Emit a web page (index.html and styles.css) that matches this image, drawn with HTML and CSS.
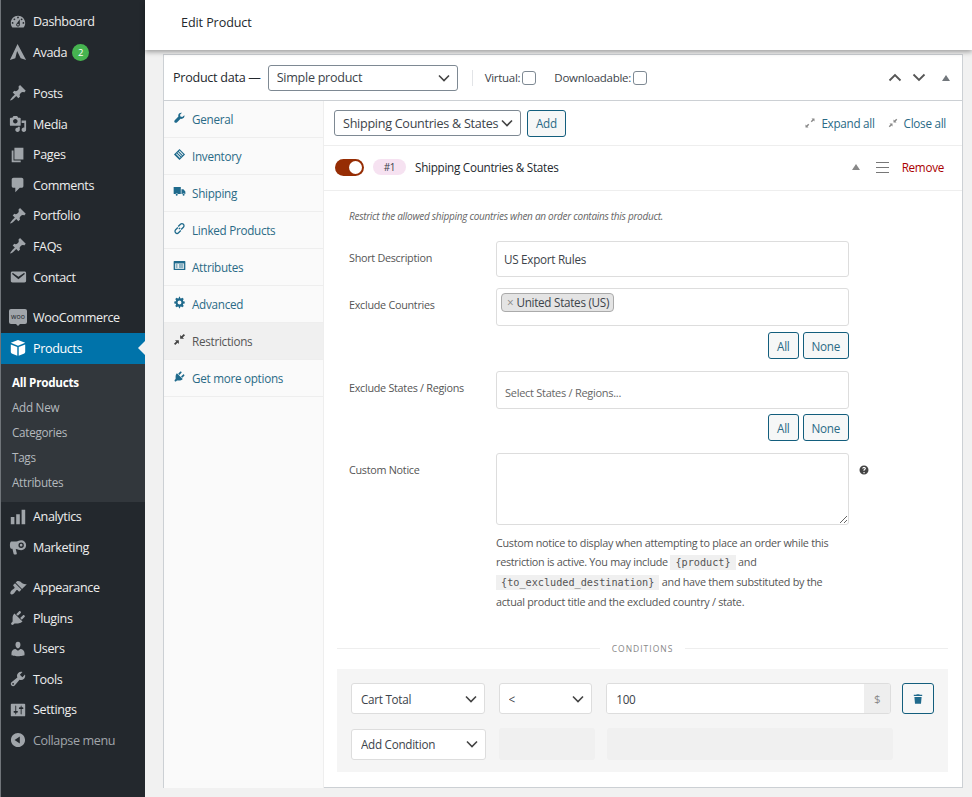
FILE: index.html
```html
<!DOCTYPE html>
<html lang="en">
<head>
    <meta charset="UTF-8">
    <meta name="viewport" content="width=device-width, initial-scale=1.0">
    <title>Edit Product</title>
    <link rel="stylesheet" href="styles.css">
</head>
<body>
    <svg class="sprite" xmlns="http://www.w3.org/2000/svg">
        <symbol id="i-dashboard" viewBox="0 0 20 20"><path d="M3.76 16h12.48c1.1-1.37 1.76-3.11 1.76-5 0-4.42-3.58-8-8-8s-8 3.58-8 8c0 1.89.66 3.63 1.76 5zM10 4c.55 0 1 .45 1 1s-.45 1-1 1-1-.45-1-1 .45-1 1-1zM6 6c.55 0 1 .45 1 1s-.45 1-1 1-1-.45-1-1 .45-1 1-1zm8 0c.55 0 1 .45 1 1s-.45 1-1 1-1-.45-1-1 .45-1 1-1zm-5.37 5.55L12 7v6c0 1.1-.9 2-2 2s-2-.9-2-2c0-.57.24-1.08.63-1.45zM4 10c.55 0 1 .45 1 1s-.45 1-1 1-1-.45-1-1 .45-1 1-1zm12 0c.55 0 1 .45 1 1s-.45 1-1 1-1-.45-1-1 .45-1 1-1zm-5 3c0-.55-.45-1-1-1s-1 .45-1 1 .45 1 1 1 1-.45 1-1z"/></symbol>
        <symbol id="i-avada" viewBox="0 0 20 20"><path d="M9.500 1 L19 19 L13 17 L9 9 L7 17 L1 19 Z"/></symbol>
        <symbol id="i-pin" viewBox="0 0 20 20"><path d="M10.44 3.02l1.82-1.82 6.36 6.35-1.83 1.82c-1.05-.68-2.48-.57-3.41.36l-.75.75c-.92.93-1.04 2.35-.35 3.41l-1.83 1.82-2.41-2.41-2.8 2.79c-.42.42-3.38 2.71-3.8 2.29s1.86-3.39 2.28-3.81l2.79-2.79L4.1 9.36l1.83-1.82c1.05.69 2.48.57 3.4-.36l.75-.75c.93-.92 1.05-2.35.36-3.41z"/></symbol>
        <symbol id="i-media" viewBox="0 0 20 20"><path d="M13 11V4c0-.55-.45-1-1-1h-1.67L9 1H5L3.67 3H2c-.55 0-1 .45-1 1v7c0 .55.45 1 1 1h10c.55 0 1-.45 1-1zM7 4.5c1.38 0 2.5 1.12 2.5 2.5S8.38 9.5 7 9.5 4.5 8.38 4.5 7 5.62 4.5 7 4.5zM14 6h5v10.5c0 1.38-1.12 2.5-2.5 2.5S14 17.88 14 16.5s1.12-2.5 2.5-2.5c.17 0 .34.02.5.05V9h-3V6zm-4 8.05V13h2v3.5c0 1.38-1.12 2.5-2.5 2.5S7 17.88 7 16.5 8.12 14 9.5 14c.17 0 .34.02.5.05z"/></symbol>
        <symbol id="i-page" viewBox="0 0 20 20"><path d="M6 15V2h10v13H6zm-1 1h8v2H3V5h2v11z"/></symbol>
        <symbol id="i-comment" viewBox="0 0 20 20"><path d="M5 2h9c1.1 0 2 .9 2 2v7c0 1.1-.9 2-2 2h-2l-5 5v-5H5c-1.1 0-2-.9-2-2V4c0-1.1.9-2 2-2z"/></symbol>
        <symbol id="i-email" viewBox="0 0 20 20"><path d="M3.87 4h13.25C18.37 4 19 4.59 19 5.79v8.42c0 1.19-.63 1.79-1.88 1.79H3.87c-1.25 0-1.88-.6-1.88-1.79V5.79c0-1.2.63-1.79 1.88-1.79zm6.62 8.6l6.74-5.53c.24-.2.43-.66.13-1.07-.29-.41-.82-.42-1.17-.17l-5.7 3.86L4.8 5.83c-.35-.25-.88-.24-1.17.17-.3.41-.11.87.13 1.07z"/></symbol>
        <symbol id="i-box" viewBox="0 0 20 20"><path d="M10 1 18 4.200 10 7.400 2 4.200zM2 6l7.200 3v9.600L3 16c-.6-.3-1-.8-1-1.500zM18 6v8.500c0 .7-.4 1.200-1 1.500l-6.200 2.600V9z"/></symbol>
        <symbol id="i-bars" viewBox="0 0 20 20"><path d="M18 18V2h-4v16h4zm-6 0V7H8v11h4zm-6 0v-8H2v8h4z"/></symbol>
        <symbol id="i-megaphone" viewBox="0 0 20 20"><path d="M13.500 2.500a5.500 5.500 0 1 1 0 11c-2 0-4-.8-6-1.200l1.200 5c.1.5-.2.9-.7.9H6c-.4 0-.8-.3-.9-.7L3.800 12H2.500C1.700 12 1 10.200 1 8s.7-4 1.500-4H8c2-.4 3.500-1.500 5.500-1.500zm0 2.500a3 3 0 1 0 0 6 3 3 0 0 0 0-6zm0 1.500a1.500 1.500 0 1 1 0 3 1.500 1.500 0 0 1 0-3z" fill-rule="evenodd"/></symbol>
        <symbol id="i-brush" viewBox="0 0 20 20"><path d="M14.480 11.060 7.410 3.990l1.500-1.500c.5-.56 2.300-.47 3.510.32 1.210.8 1.430 1.280 2.910 2.100 1.180.64 2.450 1.260 4.450.85zm-.71.71L6.700 4.700 4.930 6.470c-.39.39-.39 1.020 0 1.410l1.060 1.060c.39.39.39 1.030 0 1.420-.6.6-1.430 1.110-2.210 1.690-.35.26-.7.53-1.010.84-1.340 1.340-1.680 3.100-1 3.900.8.800 2.560.34 3.900-1 .31-.31.58-.66.84-1.010.58-.78 1.090-1.610 1.690-2.210.39-.39 1.030-.39 1.420 0l1.060 1.060c.39.39 1.020.39 1.410 0z"/></symbol>
        <symbol id="i-plugin" viewBox="0 0 20 20"><path d="M13.110 4.360 9.870 7.600 8 5.730l3.240-3.240c.35-.34 1.050-.2 1.560.32.52.51.66 1.210.31 1.550zm-8 1.770.91-1.120 9.010 9.010-1.190.84c-.71.71-2.630 1.160-3.820 1.160H6.140L4.900 17.260c-.59.59-1.540.59-2.120 0-.59-.58-.59-1.530 0-2.120l1.240-1.240v-3.880c0-1.130.4-3.190 1.090-3.890zm7.260 3.970 3.240-3.240c.34-.35 1.040-.21 1.550.31.52.51.66 1.210.31 1.550l-3.240 3.250z"/></symbol>
        <symbol id="i-user" viewBox="0 0 20 20"><path d="M10 9.250c-2.270 0-2.730-3.440-2.730-3.440C7 4.020 7.820 2 9.970 2c2.160 0 2.980 2.020 2.710 3.810 0 0-.41 3.440-2.680 3.440zm0 2.570L12.720 10c2.390 0 4.520 2.330 4.520 4.530v2.490s-3.650 1.130-7.240 1.130c-3.650 0-7.240-1.130-7.240-1.130v-2.490c0-2.250 1.940-4.480 4.470-4.480z"/></symbol>
        <symbol id="i-tools" viewBox="0 0 20 20"><path d="M16.680 9.770c-1.340 1.340-3.30 1.670-4.950.99l-5.41 6.520c-.99.99-2.590.99-3.580 0s-.99-2.590 0-3.570l6.520-5.420c-.68-1.650-.35-3.610.99-4.950 1.280-1.280 3.120-1.620 4.720-1.060l-2.890 2.890 2.820 2.820 2.860-2.870c.53 1.580.18 3.390-1.080 4.650zM3.810 16.210c.4.39 1.040.39 1.430 0 .4-.4.4-1.040 0-1.430-.39-.4-1.030-.4-1.430 0-.39.39-.39 1.030 0 1.430z"/></symbol>
        <symbol id="i-settings" viewBox="0 0 20 20"><path d="M18 16V4c0-.55-.45-1-1-1H3c-.55 0-1 .45-1 1v12c0 .55.45 1 1 1h14c.55 0 1-.45 1-1zM8 11h1c.55 0 1 .45 1 1s-.45 1-1 1H8v1.500c0 .28-.22.5-.5.5s-.5-.22-.5-.5V13H6c-.55 0-1-.45-1-1s.45-1 1-1h1V5.500c0-.28.22-.5.5-.5s.5.22.5.5V11zm5-2h-1c-.55 0-1-.45-1-1s.45-1 1-1h1V5.500c0-.28.22-.5.5-.5s.5.22.5.5V7h1c.55 0 1 .45 1 1s-.45 1-1 1h-1v5.500c0 .28-.22.5-.5.5s-.5-.22-.5-.5V9z"/></symbol>
        <symbol id="i-collapse" viewBox="0 0 20 20"><path d="M10 2.160c4.330 0 7.840 3.510 7.840 7.840s-3.510 7.840-7.840 7.840S2.160 14.330 2.160 10 5.710 2.160 10 2.160zm2 11.720V6.120L6.180 9.970z"/></symbol>
        <symbol id="i-wrench" viewBox="0 0 20 20"><path d="M17.500 6.500c.4 1.700-.1 3.300-1.300 4.400-1.300 1.200-3 1.500-4.500 1L6 17.500c-.9.900-2.400.9-3.300 0s-.9-2.400 0-3.300L8.300 8.500c-.5-1.500-.2-3.200 1-4.500C10.500 2.800 12.200 2.400 13.800 2.800l-3 3 .6 2.800 2.800.6z"/></symbol>
        <symbol id="i-tag" viewBox="0 0 20 20"><path d="M10 1.500 18.500 10 10 18.500 1.500 10zM10 4 9 5l6 6 1-1zM7.800 6.200l-1 1 6 6 1-1zM5.600 8.400l-1 1 6 6 1-1z" fill-rule="evenodd"/></symbol>
        <symbol id="i-truck" viewBox="0 0 20 20"><path d="M1 3h11v11H7.500a2 2 0 0 0-3.600 0H2c-.6 0-1-.4-1-1zM13 6.500h3l3 3.500v4h-.9a2 2 0 0 0-3.600 0H13zM5.700 13.500a1.500 1.500 0 1 1 0 3 1.500 1.500 0 0 1 0-3zM16.300 13.500a1.500 1.500 0 1 1 0 3 1.500 1.500 0 0 1 0-3z"/></symbol>
        <symbol id="i-link" viewBox="0 0 20 20"><path d="M9 11 11 9M8 7l3.500-3.500a3 3 0 0 1 4.500 4.500L12.500 11.500M12 13l-3.500 3.500a3 3 0 0 1-4.500-4.500L7.500 8.500" fill="none" stroke="currentColor" stroke-width="2"/></symbol>
        <symbol id="i-table" viewBox="0 0 20 20"><path d="M2 3h16c.6 0 1 .4 1 1v12c0 .6-.4 1-1 1H2c-.6 0-1-.4-1-1V4c0-.6.4-1 1-1zm1 4v8h14V7zm1 1.500h3v1.500H4zm5 0h7v1.500H9zM4 11.500h3V13H4zm5 0h7V13H9z" fill-rule="evenodd"/></symbol>
        <symbol id="i-gear" viewBox="0 0 20 20"><path d="M18 11.500v-3l-2.300-.5-.5-1.200 1.300-2-2.100-2.100-2 1.300-1.200-.5L10.700 1H9.300L8.800 3.500l-1.200.5-2-1.300-2.100 2.100 1.300 2L4.300 8 2 8.500v3l2.300.5.5 1.200-1.300 2 2.100 2.100 2-1.300 1.200.5.5 2.500h1.400l.5-2.500 1.200-.5 2 1.300 2.100-2.100-1.300-2 .5-1.200zM10 13a3 3 0 1 1 0-6 3 3 0 0 1 0 6z" fill-rule="evenodd"/></symbol>
        <symbol id="i-shrink" viewBox="0 0 20 20"><path d="M11 9V3l2 2 3.500-3.500 2 2L15 7l2 2zM9 11v6l-2-2-3.500 3.500-2-2L5 13l-2-2z"/></symbol>
        <symbol id="i-grow" viewBox="0 0 20 20"><path d="M19 1v6l-2-2-3.500 3.500-2-2L15 3l-2-2zM1 19v-6l2 2 3.500-3.500 2 2L5 17l2 2z"/></symbol>
        <symbol id="i-trash" viewBox="0 0 20 20"><path d="M8 2h4l1 1h4v2H3V3h4zM4 6.500h12L15 18H5z"/></symbol>
        <symbol id="i-help" viewBox="0 0 20 20"><path d="M10 1a9 9 0 1 1 0 18 9 9 0 0 1 0-18zm1.300 13.200H8.900V16.500h2.400zM10 3.800c-2.100 0-3.700 1.100-3.800 3.400h2.400c.1-.9.600-1.400 1.400-1.400.8 0 1.300.4 1.300 1.100 0 .7-.5 1.100-1.200 1.600-1 .7-1.500 1.500-1.300 3h2.300c-.1-.8.200-1.200 1-1.800 1-.7 1.700-1.500 1.700-2.900 0-1.900-1.500-3-3.800-3z" fill-rule="evenodd"/></symbol>
    </svg>

    <div class="admin">
        <nav class="sidebar">
            <ul class="menu first">
                <li class="menu-item"><svg class="menu-icon"><use href="#i-dashboard"/></svg>Dashboard</li>
                <li class="menu-item"><svg class="menu-icon"><use href="#i-avada"/></svg>Avada <span class="count">2</span></li>
            </ul>
            <ul class="menu">
                <li class="menu-item"><svg class="menu-icon"><use href="#i-pin"/></svg>Posts</li>
                <li class="menu-item"><svg class="menu-icon"><use href="#i-media"/></svg>Media</li>
                <li class="menu-item"><svg class="menu-icon"><use href="#i-page"/></svg>Pages</li>
                <li class="menu-item"><svg class="menu-icon"><use href="#i-comment"/></svg>Comments</li>
                <li class="menu-item"><svg class="menu-icon"><use href="#i-pin"/></svg>Portfolio</li>
                <li class="menu-item"><svg class="menu-icon"><use href="#i-pin"/></svg>FAQs</li>
                <li class="menu-item"><svg class="menu-icon"><use href="#i-email"/></svg>Contact</li>
            </ul>
            <ul class="menu">
                <li class="menu-item"><span class="woo-icon">woo</span>WooCommerce</li>
                <li class="menu-item current"><svg class="menu-icon"><use href="#i-box"/></svg>Products</li>
            </ul>
            <ul class="submenu">
                <li class="strong">All Products</li>
                <li>Add New</li>
                <li>Categories</li>
                <li>Tags</li>
                <li>Attributes</li>
            </ul>
            <ul class="menu nogap">
                <li class="menu-item"><svg class="menu-icon"><use href="#i-bars"/></svg>Analytics</li>
                <li class="menu-item"><svg class="menu-icon"><use href="#i-megaphone"/></svg>Marketing</li>
            </ul>
            <ul class="menu">
                <li class="menu-item"><svg class="menu-icon"><use href="#i-brush"/></svg>Appearance</li>
                <li class="menu-item"><svg class="menu-icon"><use href="#i-plugin"/></svg>Plugins</li>
                <li class="menu-item"><svg class="menu-icon"><use href="#i-user"/></svg>Users</li>
                <li class="menu-item"><svg class="menu-icon"><use href="#i-tools"/></svg>Tools</li>
                <li class="menu-item"><svg class="menu-icon"><use href="#i-settings"/></svg>Settings</li>
                <li class="menu-item collapse"><svg class="menu-icon"><use href="#i-collapse"/></svg>Collapse menu</li>
            </ul>
        </nav>

        <main class="main">
            <header class="topbar">Edit Product</header>

            <section class="panel">
                <div class="panel-head">
                    <span class="panel-title">Product data —</span>
                    <select class="select type-select"><option>Simple product</option></select>
                    <span class="head-sep"></span>
                    <label class="check-label">Virtual: <input type="checkbox"></label>
                    <label class="check-label">Downloadable: <input type="checkbox"></label>
                    <span class="head-arrows">
                        <svg class="chev" viewBox="0 0 14 9"><path d="M1.500 7.500 7 2l5.500 5.500"/></svg>
                        <svg class="chev" viewBox="0 0 14 9"><path d="M1.500 1.500 7 7l5.500-5.500"/></svg>
                        <span class="tri tri-dark"></span>
                    </span>
                </div>

                <div class="panel-body">
                    <ul class="tabs">
                        <li><svg class="tab-icon"><use href="#i-wrench"/></svg>General</li>
                        <li><svg class="tab-icon"><use href="#i-tag"/></svg>Inventory</li>
                        <li><svg class="tab-icon"><use href="#i-truck"/></svg>Shipping</li>
                        <li><svg class="tab-icon"><use href="#i-link"/></svg>Linked Products</li>
                        <li><svg class="tab-icon"><use href="#i-table"/></svg>Attributes</li>
                        <li><svg class="tab-icon"><use href="#i-gear"/></svg>Advanced</li>
                        <li class="active"><svg class="tab-icon"><use href="#i-shrink"/></svg>Restrictions</li>
                        <li><svg class="tab-icon"><use href="#i-plugin"/></svg>Get more options</li>
                    </ul>

                    <div class="content">
                        <div class="toolbar">
                            <select class="select add-select"><option>Shipping Countries &amp; States</option></select>
                            <button class="btn add-btn">Add</button>
                            <span class="toolbar-links">
                                <a><svg class="mini-icon"><use href="#i-grow"/></svg>Expand all</a>
                                <a><svg class="mini-icon"><use href="#i-shrink"/></svg>Close all</a>
                            </span>
                        </div>

                        <div class="rule-head">
                            <span class="toggle"></span>
                            <span class="rule-num">#1</span>
                            <span class="rule-title">Shipping Countries &amp; States</span>
                            <span class="tri"></span>
                            <span class="burger"></span>
                            <a class="remove">Remove</a>
                        </div>

                        <div class="rule-body">
                            <p class="rule-desc">Restrict the allowed shipping countries when an order contains this product.</p>

                            <div class="field">
                                <label class="field-label">Short Description</label>
                                <div class="field-main">
                                    <input class="text-input" type="text" value="US Export Rules">
                                </div>
                            </div>

                            <div class="field roomy">
                                <label class="field-label">Exclude Countries</label>
                                <div class="field-main">
                                    <div class="multi"><span class="chip"><i>×</i>United States (US)</span></div>
                                    <div class="pick-btns"><button class="btn">All</button><button class="btn">None</button></div>
                                </div>
                            </div>

                            <div class="field roomy">
                                <label class="field-label low">Exclude States / Regions</label>
                                <div class="field-main">
                                    <div class="multi placeholder">Select States / Regions...</div>
                                    <div class="pick-btns tight"><button class="btn">All</button><button class="btn">None</button></div>
                                </div>
                            </div>

                            <div class="field">
                                <label class="field-label notice">Custom Notice</label>
                                <div class="field-main">
                                    <textarea class="notice-area"></textarea>
                                    <p class="hint">Custom notice to display when attempting to place an order while this restriction is active. You may include <code>{product}</code> and <code>{to_excluded_destination}</code> and have them substituted by the actual product title and the excluded country / state.</p>
                                </div>
                                <svg class="help"><use href="#i-help"/></svg>
                            </div>
                        </div>

                        <div class="divider"><span>CONDITIONS</span></div>

                        <div class="conditions">
                            <div class="cond-row">
                                <select class="select cond-a"><option>Cart Total</option></select>
                                <select class="select cond-b"><option>&lt;</option></select>
                                <div class="amount"><input type="text" value="100"><span>$</span></div>
                                <button class="btn trash"><svg><use href="#i-trash"/></svg></button>
                            </div>
                            <div class="cond-row">
                                <select class="select cond-a wide"><option>Add Condition</option></select>
                                <span class="ghost cond-b wide"></span>
                                <span class="ghost grow"></span>
                            </div>
                        </div>
                    </div>
                </div>
            </section>
        </main>
    </div>
</body>
</html>
```

FILE: styles.css
```css
* {
    margin: 0;
    padding: 0;
    box-sizing: border-box;
}

body {
    height: 797px;
    overflow: hidden;
    background: #f1f1f1;
    color: #3c434a;
    font-family: "Open Sans", "Noto Sans", sans-serif;
    font-size: 11.5px;
    letter-spacing: -0.28px;
}

ul {
    list-style: none;
}

input, select, textarea, button {
    font-family: inherit;
    color: inherit;
    letter-spacing: inherit;
}

.sprite {
    display: none;
}

.admin {
    display: flex;
    height: 797px;
}

/* sidebar */
.sidebar {
    flex: 0 0 145px;
    background: #23282d;
    border-left: 1px solid #70757a;
    color: #eee;
    font-size: 12.6px;
    letter-spacing: -0.38px;
    padding-top: 6.5px;
}

.menu {
    margin-bottom: 10px;
}

.menu.nogap {
    margin-bottom: 9.5px;
}

.menu-item {
    display: flex;
    align-items: center;
    height: 30.6px;
    padding-left: 8px;
    white-space: nowrap;
}

.menu-icon {
    width: 18px;
    height: 18px;
    margin-right: 6px;
    fill: #a0a5aa;
    flex: none;
}

.woo-icon {
    position: relative;
    width: 18px;
    height: 15px;
    margin-right: 6px;
    margin-top: -2px;
    border-radius: 2px;
    background: #a0a5aa;
    color: #23282d;
    font-size: 7px;
    letter-spacing: 0;
    line-height: 15px;
    text-align: center;
    flex: none;
}

.woo-icon::after {
    content: "";
    position: absolute;
    left: 7px;
    top: 15px;
    border: 2px solid transparent;
    border-top-color: #a0a5aa;
}

.count {
    display: inline-block;
    width: 17px;
    height: 17px;
    margin-left: 5px;
    border-radius: 50%;
    background: #46b450;
    color: #fff;
    font-size: 9.5px;
    line-height: 17px;
    text-align: center;
}

.menu-item.current {
    position: relative;
    background: #0073aa;
    color: #fff;
}

.menu-item.current .menu-icon {
    fill: #fff;
}

.menu-item.current::after {
    content: "";
    position: absolute;
    right: 0;
    top: 8px;
    border: 7px solid transparent;
    border-left: 0;
    border-right-color: #f1f1f1;
}

.menu-item.collapse {
    color: #a0a5aa;
}

.menu.first {
    margin-bottom: 10.5px;
}

.submenu {
    margin-top: -10px;
    background: #32373c;
    color: #b4b9be;
    font-size: 11.7px;
    letter-spacing: -0.28px;
    padding: 6px 0 7px 11px;
    margin-bottom: 0;
}

.submenu li {
    height: 25px;
    line-height: 25px;
}

.submenu .strong {
    color: #fff;
    font-weight: 700;
}

/* main column */
.main {
    flex: 1;
    min-width: 0;
}

.topbar {
    position: relative;
    height: 50px;
    padding-left: 36px;
    background: #fff;
    box-shadow: 0 2px 5px rgba(0, 0, 0, 0.35);
    color: #23282d;
    font-size: 12.6px;
    letter-spacing: -0.1px;
    line-height: 46px;
}

.panel {
    width: 800px;
    height: 734px;
    margin: 4px 0 0 18px;
    background: #fff;
    border: 1px solid #ccd0d4;
}

.panel-head {
    display: flex;
    align-items: center;
    height: 46px;
    padding: 0 9px;
    border-bottom: 1px solid #ccd0d4;
}

.panel-title {
    font-size: 12.6px;
    color: #23282d;
    margin-right: 7px;
}

.select {
    appearance: none;
    height: 26px;
    padding: 0 20px 0 8px;
    background: #fff url("data:image/svg+xml,%3Csvg xmlns='http://www.w3.org/2000/svg' width='12' height='8'%3E%3Cpath d='M1 1.500 6 6.500l5-5' fill='none' stroke='%23444' stroke-width='1.600'/%3E%3C/svg%3E") no-repeat right 7px center;
    border: 1px solid #7e8993;
    border-radius: 3px;
    font-size: 12.6px;
}

.type-select {
    width: 190px;
    margin-right: 14px;
}

.head-sep {
    width: 1px;
    height: 16px;
    background: #e2e4e7;
    margin-right: 12px;
}

.check-label {
    display: flex;
    align-items: center;
    gap: 2px;
    font-size: 11.5px;
    margin-right: 18px;
}

.check-label input {
    appearance: none;
    width: 14px;
    height: 14px;
    border: 1px solid #7e8993;
    border-radius: 3px;
    background: #fff;
}

.head-arrows {
    display: flex;
    align-items: center;
    gap: 10px;
    margin-left: auto;
    margin-right: 3px;
}

.chev {
    width: 14px;
    height: 9px;
    fill: none;
    stroke: #555;
    stroke-width: 1.800;
}

.tri {
    width: 0;
    height: 0;
    border: 4.500px solid transparent;
    border-top: 0;
    border-bottom: 6px solid #888;
}

.tri-dark {
    margin-left: 6px;
    border-bottom-color: #72777c;
}

.panel-body {
    display: flex;
    height: 687px;
}

/* tabs */
.tabs {
    flex: 0 0 160px;
    background: #fafafa;
    border-right: 1px solid #eee;
    color: #2a6a86;
    font-size: 11.7px;
}

.tabs li {
    display: flex;
    align-items: center;
    height: 37px;
    padding-left: 9px;
    border-bottom: 1px solid #eee;
}

.tabs li.active {
    background: #f0f0f0;
    color: #555;
}

.tabs li.active .tab-icon {
    fill: #444;
}

.tab-icon {
    width: 13px;
    height: 13px;
    margin-right: 6px;
    margin-top: -3px;
    fill: #1f6a8c;
    color: #1f6a8c;
    flex: none;
}

/* right content */
.content {
    flex: 1;
    min-width: 0;
}

.toolbar {
    display: flex;
    align-items: center;
    height: 45px;
    padding: 0 16px 0 10px;
    border-bottom: 1px solid #eee;
}

.add-select {
    width: 187px;
    margin-right: 6px;
}

.btn {
    height: 27px;
    padding: 0 8px;
    background: #f6f7f7;
    border: 1px solid #135e7d;
    border-radius: 3px;
    color: #2a6a86;
    font-size: 11.7px;
}

.toolbar-links {
    display: flex;
    gap: 13px;
    margin-left: auto;
    color: #2a6a86;
    font-size: 11.7px;
}

.toolbar-links a {
    display: flex;
    align-items: center;
}

.mini-icon {
    width: 10px;
    height: 10px;
    margin-right: 6px;
    fill: #888;
}

.rule-head {
    display: flex;
    align-items: center;
    height: 45px;
    padding: 0 18px 2px 11px;
    border-bottom: 1px solid #eee;
}

.toggle {
    position: relative;
    width: 29px;
    height: 17px;
    margin-right: 9px;
    border-radius: 9px;
    background: #962d04;
}

.toggle::after {
    content: "";
    position: absolute;
    top: 2px;
    right: 2px;
    width: 13px;
    height: 13px;
    border-radius: 50%;
    background: #fff;
}

.rule-num {
    width: 33px;
    height: 16px;
    margin-right: 9px;
    border-radius: 8px;
    background: #f6e2f1;
    font-size: 10px;
    line-height: 16px;
    text-align: center;
}

.rule-title {
    flex: 1;
    color: #23282d;
    font-size: 11.7px;
}

.burger {
    width: 13px;
    height: 11px;
    margin: 0 13px 0 16px;
    border-top: 1px solid #777;
    border-bottom: 1px solid #777;
    background: linear-gradient(#777, #777) center / 100% 1px no-repeat;
}

.remove {
    color: #a00;
    font-size: 11.7px;
}

.rule-body {
    padding: 17px 0 0 25px;
}

.rule-desc {
    margin-bottom: 17px;
    color: #666;
    font-size: 10px;
    font-style: italic;
    line-height: 16px;
}

.field {
    display: flex;
    margin-bottom: 11px;
}

.field.roomy {
    margin-bottom: 12px;
}

.field-label {
    flex: 0 0 147px;
    color: #555;
    font-size: 10.8px;
    padding-top: 9px;
    line-height: 16px;
}

.field-main {
    width: 353px;
}

.text-input {
    display: block;
    width: 100%;
    height: 36px;
    padding: 0 7px;
    border: 1px solid #ddd;
    border-radius: 3px;
    font-size: 11.7px;
}

.multi {
    height: 38px;
    padding: 4px;
    border: 1px solid #ddd;
    border-radius: 3px;
    font-size: 11.7px;
}

.multi.placeholder {
    padding: 13px 8px 0;
    color: #666;
    font-size: 11px;
}

.chip {
    display: inline-block;
    height: 19px;
    padding: 0 4px 0 5px;
    background: #e4e4e4;
    border: 1px solid #aaa;
    border-radius: 4px;
    line-height: 16px;
}

.chip i {
    margin-right: 3px;
    color: #888;
    font-style: normal;
}

.pick-btns {
    display: flex;
    justify-content: flex-end;
    gap: 4px;
    margin-top: 6px;
}

.pick-btns.tight {
    margin-top: 5px;
}

.notice-area {
    display: block;
    width: 100%;
    height: 72px;
    border: 1px solid #ddd;
    border-radius: 3px;
}

.hint {
    margin-top: 8px;
    color: #555;
    font-size: 10.8px;
    line-height: 19px;
}

.hint code {
    padding: 2px 5px;
    background: #f0f0f0;
    font-family: "DejaVu Sans Mono", monospace;
    font-size: 10.2px;
    letter-spacing: 0;
}

.help {
    width: 10px;
    height: 10px;
    margin: 12px 0 0 10px;
    fill: #444;
}

.divider {
    display: flex;
    align-items: center;
    gap: 12px;
    margin: 32px 14px 15px 13px;
    color: #888;
    font-size: 8.500px;
    letter-spacing: 1px;
}

.divider::before,
.divider::after {
    content: "";
    flex: 1;
    height: 1px;
    background: #eee;
}

.conditions {
    width: 611px;
    height: 103px;
    margin-left: 13px;
    padding: 14px;
    background: #f5f5f5;
}

.cond-row {
    display: flex;
    align-items: center;
    gap: 14px;
    margin-bottom: 14px;
}

.conditions .select {
    height: 31px;
    padding-left: 9px;
    border-color: #ddd;
    font-size: 11.7px;
}

.cond-a {
    width: 134px;
}

.cond-b {
    width: 94px;
}

.cond-a.wide {
    width: 135px;
}

.cond-b.wide {
    width: 96px;
    margin: 0 -2px 0 -1px;
}

.amount {
    display: flex;
    width: 286px;
    height: 31px;
    background: #fff;
    border: 1px solid #ddd;
    border-radius: 3px;
    overflow: hidden;
}

.amount input {
    flex: 1;
    min-width: 0;
    padding: 0 9px;
    border: 0;
    font-size: 11.7px;
}

.amount span {
    width: 26px;
    background: #eee;
    color: #888;
    line-height: 29px;
    text-align: center;
}

.trash {
    width: 32px;
    height: 31px;
    margin-left: -3px;
    padding: 0;
}

.trash svg {
    display: block;
    width: 12px;
    height: 12px;
    margin: auto;
    fill: #1f6a8c;
}

.ghost {
    display: block;
    height: 32px;
    background: #f0f0f0;
    border-radius: 3px;
}

.ghost.grow {
    width: 286px;
}
```
